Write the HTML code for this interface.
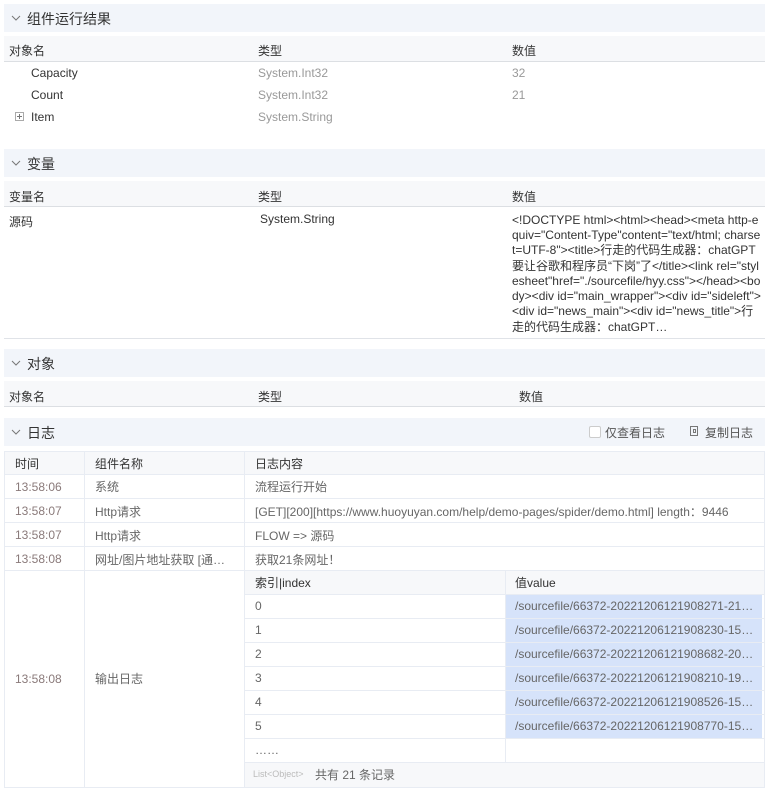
<!DOCTYPE html>
<html><head><meta charset="utf-8">
<style>
*{margin:0;padding:0;box-sizing:border-box}
body{width:769px;height:792px;background:#fff;font-family:"Liberation Sans","Noto Sans CJK SC",sans-serif;font-size:12px;color:#333;position:relative;overflow:hidden}
.a{position:absolute;white-space:nowrap}
.sec{position:absolute;left:4px;width:761px;height:28px;background:#f2f5fa}
.sec span{position:absolute;left:23px;top:5px;font-size:14px;color:#333}
.chev{position:absolute;left:7px;top:10px;width:10px;height:8px}
.th{position:absolute;left:4px;width:761px;height:26px;background:#f7f8fa;border-bottom:1px solid #dcdfe3}
.g{color:#999}
.lt{position:absolute;left:4px;width:761px;border-left:1px solid #e8ecf3;border-top:1px solid #e8ecf3}
.t{color:#8a7a7a}
.d{color:#666}
.s{position:absolute;left:512px;white-space:nowrap;color:#333;line-height:14px}
</style></head><body>
<div class="sec" style="top:4px"><svg class="chev" viewBox="0 0 10 8"><path d="M1 2 L5 6 L9 2" fill="none" stroke="#777" stroke-width="1"/></svg><span>组件运行结果</span></div>
<div class="th" style="top:36px"></div>
<div class="a" style="left:9px;top:42px">对象名</div><div class="a" style="left:258px;top:42px">类型</div><div class="a" style="left:512px;top:42px">数值</div>
<div class="a" style="left:31px;top:66px">Capacity</div><div class="a g" style="left:258px;top:66px">System.Int32</div><div class="a g" style="left:512px;top:66px">32</div>
<div class="a" style="left:31px;top:88px">Count</div><div class="a g" style="left:258px;top:88px">System.Int32</div><div class="a g" style="left:512px;top:88px">21</div>
<div class="a" style="left:15px;top:112px;width:9px;height:9px;border:1px solid #aaa"></div><div class="a" style="left:17px;top:116px;width:5px;height:1px;background:#777"></div><div class="a" style="left:19px;top:114px;width:1px;height:5px;background:#777"></div>
<div class="a" style="left:31px;top:110px">Item</div><div class="a g" style="left:258px;top:110px">System.String</div>

<div class="sec" style="top:149px"><svg class="chev" viewBox="0 0 10 8"><path d="M1 2 L5 6 L9 2" fill="none" stroke="#777" stroke-width="1"/></svg><span>变量</span></div>
<div class="th" style="top:181px"></div>
<div class="a" style="left:9px;top:188px">变量名</div><div class="a" style="left:258px;top:188px">类型</div><div class="a" style="left:512px;top:188px">数值</div>
<div class="a" style="left:9px;top:213px">源码</div><div class="a" style="left:260px;top:212px">System.String</div>
<div class="s" style="top:213px">&lt;!DOCTYPE html&gt;&lt;html&gt;&lt;head&gt;&lt;meta http-e</div>
<div class="s" style="top:228px">quiv="Content-Type"content="text/html; charse</div>
<div class="s" style="top:243px">t=UTF-8"&gt;&lt;title&gt;行走的代码生成器：chatGPT</div>
<div class="s" style="top:259px">要让谷歌和程序员“下岗”了&lt;/title&gt;&lt;link rel="styl</div>
<div class="s" style="top:274px">esheet"href="./sourcefile/hyy.css"&gt;&lt;/head&gt;&lt;bo</div>
<div class="s" style="top:289px">dy&gt;&lt;div id="main_wrapper"&gt;&lt;div id="sideleft"&gt;</div>
<div class="s" style="top:304px">&lt;div id="news_main"&gt;&lt;div id="news_title"&gt;行</div>
<div class="s" style="top:320px">走的代码生成器：chatGPT…</div>
<div class="a" style="left:4px;top:338px;width:761px;height:1px;background:#e0e3e8"></div>

<div class="sec" style="top:349px"><svg class="chev" viewBox="0 0 10 8"><path d="M1 2 L5 6 L9 2" fill="none" stroke="#777" stroke-width="1"/></svg><span>对象</span></div>
<div class="th" style="top:381px"></div>
<div class="a" style="left:9px;top:388px">对象名</div><div class="a" style="left:258px;top:388px">类型</div><div class="a" style="left:519px;top:388px">数值</div>

<div class="sec" style="top:418px"><svg class="chev" viewBox="0 0 10 8"><path d="M1 2 L5 6 L9 2" fill="none" stroke="#777" stroke-width="1"/></svg><span>日志</span>
<div class="a" style="left:585px;top:8px;width:12px;height:12px;border:1px solid #ccc;background:#fff;border-radius:2px"></div>
<div class="a" style="left:601px;top:6px;font-size:12px;color:#555">仅查看日志</div>
<div class="a" style="left:686px;top:8px;width:8px;height:10px;border:1px solid #777"></div><div class="a" style="left:689px;top:11px;width:3px;height:4px;border:1px solid #777"></div>
<div class="a" style="left:701px;top:6px;font-size:12px;color:#555">复制日志</div></div>

<div class="lt" style="top:451px;height:337px;border-bottom:1px solid #e8ecf3;border-right:1px solid #e8ecf3"></div>
<div class="a" style="left:5px;top:452px;width:759px;height:23px;background:#f7f8fa"></div>
<div class="a" style="left:84px;top:451px;width:1px;height:336px;background:#e8ecf3"></div>
<div class="a" style="left:244px;top:451px;width:1px;height:336px;background:#e8ecf3"></div>
<div class="a" style="left:5px;top:474px;width:759px;height:1px;background:#e8ecf3"></div>
<div class="a" style="left:5px;top:498px;width:759px;height:1px;background:#e8ecf3"></div>
<div class="a" style="left:5px;top:522px;width:759px;height:1px;background:#e8ecf3"></div>
<div class="a" style="left:5px;top:546px;width:759px;height:1px;background:#e8ecf3"></div>
<div class="a" style="left:5px;top:570px;width:759px;height:1px;background:#e8ecf3"></div>
<div class="a" style="left:15px;top:455px">时间</div><div class="a" style="left:95px;top:455px">组件名称</div><div class="a" style="left:255px;top:455px">日志内容</div>
<div class="a t" style="left:15px;top:480px">13:58:06</div><div class="a d" style="left:95px;top:478px">系统</div><div class="a d" style="left:255px;top:478px">流程运行开始</div>
<div class="a t" style="left:15px;top:504px">13:58:07</div><div class="a d" style="left:95px;top:503px">Http请求</div><div class="a d" style="left:255px;top:503px">[GET][200][https://www.huoyuyan.com/help/demo-pages/spider/demo.html] length：9446</div>
<div class="a t" style="left:15px;top:528px">13:58:07</div><div class="a d" style="left:95px;top:527px">Http请求</div><div class="a d" style="left:255px;top:527px">FLOW =&gt; 源码</div>
<div class="a t" style="left:15px;top:552px">13:58:08</div><div class="a d" style="left:95px;top:551px">网址/图片地址获取 [通…</div><div class="a d" style="left:255px;top:551px">获取21条网址！</div>
<div class="a t" style="left:15px;top:672px">13:58:08</div><div class="a d" style="left:95px;top:670px">输出日志</div>

<div class="a" style="left:245px;top:571px;width:519px;height:23px;background:#f7f8fa"></div>
<div class="a" style="left:505px;top:571px;width:1px;height:192px;background:#e8ecf3"></div>
<div class="a" style="left:506px;top:595px;width:256px;height:143px;background:#d6e3fa"></div>
<div class="a" style="left:245px;top:594px;width:519px;height:1px;background:#e8ecf3"></div>
<div class="a" style="left:245px;top:618px;width:519px;height:1px;background:#e8ecf3"></div>
<div class="a" style="left:245px;top:642px;width:519px;height:1px;background:#e8ecf3"></div>
<div class="a" style="left:245px;top:666px;width:519px;height:1px;background:#e8ecf3"></div>
<div class="a" style="left:245px;top:690px;width:519px;height:1px;background:#e8ecf3"></div>
<div class="a" style="left:245px;top:714px;width:519px;height:1px;background:#e8ecf3"></div>
<div class="a" style="left:245px;top:738px;width:519px;height:1px;background:#e8ecf3"></div>
<div class="a" style="left:245px;top:762px;width:519px;height:1px;background:#e8ecf3"></div>
<div class="a" style="left:245px;top:763px;width:519px;height:24px;background:#f7f8fa"></div>
<div class="a" style="left:255px;top:574px">索引|index</div><div class="a" style="left:515px;top:574px">值value</div>
<div class="a d" style="left:255px;top:599px">0</div><div class="a d" style="left:515px;top:599px">/sourcefile/66372-20221206121908271-21…</div>
<div class="a d" style="left:255px;top:623px">1</div><div class="a d" style="left:515px;top:623px">/sourcefile/66372-20221206121908230-15…</div>
<div class="a d" style="left:255px;top:647px">2</div><div class="a d" style="left:515px;top:647px">/sourcefile/66372-20221206121908682-20…</div>
<div class="a d" style="left:255px;top:671px">3</div><div class="a d" style="left:515px;top:671px">/sourcefile/66372-20221206121908210-19…</div>
<div class="a d" style="left:255px;top:695px">4</div><div class="a d" style="left:515px;top:695px">/sourcefile/66372-20221206121908526-15…</div>
<div class="a d" style="left:255px;top:719px">5</div><div class="a d" style="left:515px;top:719px">/sourcefile/66372-20221206121908770-15…</div>
<div class="a d" style="left:255px;top:743px">……</div>
<div class="a" style="left:253px;top:769px;font-size:9px;color:#bbb">List&lt;Object&gt;</div><div class="a d" style="left:315px;top:766px">共有 21 条记录</div>
</body></html>
